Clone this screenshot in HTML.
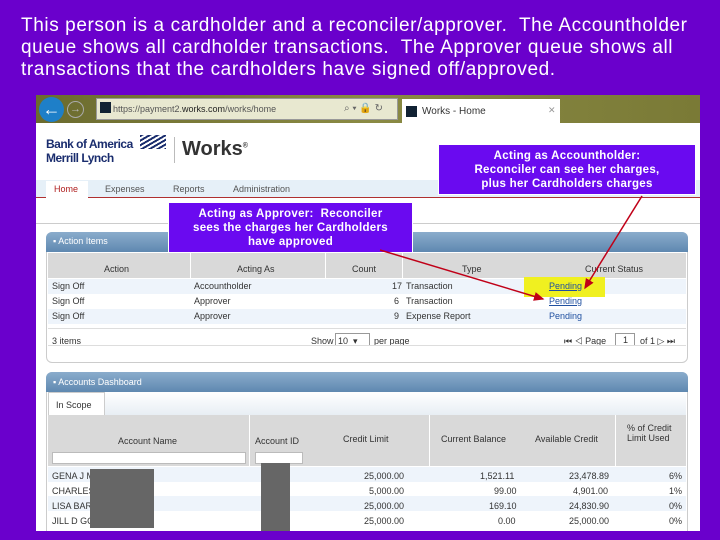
<!DOCTYPE html>
<html><head><meta charset="utf-8"><style>
*{margin:0;padding:0;box-sizing:border-box}
body{width:720px;height:540px;background:#6a00cc;position:relative;overflow:hidden;font-family:"Liberation Sans",sans-serif}
.abs{position:absolute}
.t{position:absolute;left:21px;top:15px;color:#fff;font-size:19px;letter-spacing:0.6px;line-height:22px;white-space:nowrap}
.shot{position:absolute;left:36px;top:95px;width:664px;height:436px;background:#fff;overflow:hidden}
.f{font-size:9px;color:#333;position:absolute;white-space:nowrap}
.call{position:absolute;background:#6a0af0;color:#fff;font-weight:bold;font-size:11.5px;line-height:14px;text-align:center;border:1px solid #fff;letter-spacing:0.3px}
.row{position:absolute;left:12px;width:638px;height:15px}
</style></head><body>
<div class="t">This person is a cardholder and a reconciler/approver.&nbsp; The Accountholder<br>queue shows all cardholder transactions.&nbsp; The Approver queue shows all<br>transactions that the cardholders have signed off/approved.</div>
<div class="shot">
 <div class="abs" style="left:0;top:0;width:664px;height:28px;background:linear-gradient(90deg,#6b6b2e,#8a8a44 50%,#7a7a36)"></div>
 <div class="abs" style="left:3px;top:2px;width:25px;height:25px;border-radius:50%;background:#1e7fc8;color:#fff;font-size:18px;line-height:24px;text-align:center;font-weight:bold">←</div>
 <div class="abs" style="left:31px;top:6px;width:17px;height:17px;border-radius:50%;border:1px solid #aaa;color:#bbb;font-size:11px;line-height:15px;text-align:center">→</div>
 <div class="abs" style="left:60px;top:3px;width:302px;height:22px;background:#e8e8d0;border:1px solid #999"></div>
 <div class="f" style="left:77px;top:9px;color:#555">https://payment2.<b style="color:#222;font-weight:normal">works.com</b>/works/home</div>
 <div class="abs" style="left:64px;top:7px;width:11px;height:11px;background:#123"></div>
 <div class="f" style="left:308px;top:8px;color:#666;font-size:10px">⌕ ▾ 🔒 ↻</div>
 <div class="abs" style="left:366px;top:4px;width:158px;height:24px;background:#fff"></div>
 <div class="abs" style="left:370px;top:11px;width:11px;height:11px;background:#123"></div>
 <div class="f" style="left:386px;top:11px;font-size:10px">Works - Home</div>
 <div class="f" style="left:512px;top:10px;color:#999">✕</div>
 <div class="abs" style="left:10px;top:42px;color:#1a2d6e;font-weight:bold;font-size:12px;line-height:14px;letter-spacing:-0.5px">Bank of America<br>Merrill Lynch</div>
 <div class="abs" style="left:104px;top:40px;width:26px;height:14px;background:repeating-linear-gradient(150deg,#1a2d6e 0 2px,#fff 2px 4px)"></div>
 <div class="abs" style="left:138px;top:42px;width:1px;height:26px;background:#bbb"></div>
 <div class="abs" style="left:146px;top:43px;font-size:20px;font-weight:bold;color:#333">Works<sup style="font-size:7px">®</sup></div>
 <div class="abs" style="left:0;top:85px;width:664px;height:18px;background:#e6f0f8;border-bottom:1px solid #b03030"></div>
 <div class="abs" style="left:10px;top:86px;width:42px;height:17px;background:#fff"></div>
 <div class="f" style="left:18px;top:89px;color:#b02020">Home</div>
 <div class="f" style="left:69px;top:89px;color:#555">Expenses</div>
 <div class="f" style="left:137px;top:89px;color:#555">Reports</div>
 <div class="f" style="left:197px;top:89px;color:#555">Administration</div>
 <div class="abs" style="left:0;top:128px;width:664px;height:1px;background:#ccc"></div>
 <div class="abs" style="left:10px;top:137px;width:642px;height:131px;border:1px solid #ccc;border-radius:6px;background:#fff"></div>
 <div class="abs" style="left:10px;top:137px;width:642px;height:20px;border-radius:6px 6px 0 0;background:linear-gradient(#8aaccc,#5f88b0)"></div>
 <div class="f" style="left:17px;top:141px;color:#fff">▪ Action Items</div>
 <div class="abs" style="left:12px;top:158px;width:638px;height:25px;background:#d9d9d9"></div>
 <div class="abs" style="left:154px;top:158px;width:1px;height:25px;background:#fff"></div>
 <div class="abs" style="left:289px;top:158px;width:1px;height:25px;background:#fff"></div>
 <div class="abs" style="left:366px;top:158px;width:1px;height:25px;background:#fff"></div>
 <div class="f" style="left:68px;top:169px">Action</div>
 <div class="f" style="left:201px;top:169px">Acting As</div>
 <div class="f" style="left:316px;top:169px">Count</div>
 <div class="f" style="left:426px;top:169px">Type</div>
 <div class="f" style="left:549px;top:169px">Current Status</div>
 <div class="row" style="top:184px;background:#eef4fb"></div>
 <div class="row" style="top:214px;background:#eef4fb"></div>
 <div class="abs" style="left:488px;top:182px;width:81px;height:20px;background:#f0f020"></div>
 <div class="f" style="left:16px;top:186px">Sign Off</div><div class="f" style="left:158px;top:186px">Accountholder</div><div class="f" style="left:356px;top:186px">17</div><div class="f" style="left:370px;top:186px">Transaction</div><div class="f" style="left:513px;top:186px;color:#2050a0;text-decoration:underline">Pending</div>
 <div class="f" style="left:16px;top:201px">Sign Off</div><div class="f" style="left:158px;top:201px">Approver</div><div class="f" style="left:358px;top:201px">6</div><div class="f" style="left:370px;top:201px">Transaction</div><div class="f" style="left:513px;top:201px;color:#2050a0;text-decoration:underline">Pending</div>
 <div class="f" style="left:16px;top:216px">Sign Off</div><div class="f" style="left:158px;top:216px">Approver</div><div class="f" style="left:358px;top:216px">9</div><div class="f" style="left:370px;top:216px">Expense Report</div><div class="f" style="left:513px;top:216px;color:#2050a0">Pending</div>
 <div class="abs" style="left:12px;top:233px;width:638px;height:1px;background:#ddd"></div>
 <div class="f" style="left:16px;top:241px">3 items</div>
 <div class="f" style="left:275px;top:241px">Show</div>
 <div class="abs" style="left:299px;top:238px;width:35px;height:13px;border:1px solid #999"></div>
 <div class="f" style="left:302px;top:241px">10 &nbsp;▾</div>
 <div class="f" style="left:338px;top:241px">per page</div>
 <div class="f" style="left:528px;top:241px">⏮ ◁ Page</div>
 <div class="abs" style="left:579px;top:238px;width:20px;height:13px;border:1px solid #999"></div>
 <div class="f" style="left:587px;top:240px">1</div>
 <div class="f" style="left:604px;top:241px">of 1 ▷ ⏭</div>
 <div class="abs" style="left:12px;top:250px;width:638px;height:1px;background:#ddd"></div>
 <div class="abs" style="left:10px;top:277px;width:642px;height:170px;border:1px solid #ccc;border-radius:6px;background:#fff"></div>
 <div class="abs" style="left:10px;top:277px;width:642px;height:20px;border-radius:6px 6px 0 0;background:linear-gradient(#8aaccc,#5f88b0)"></div>
 <div class="f" style="left:17px;top:282px;color:#fff">▪ Accounts Dashboard</div>
 <div class="abs" style="left:12px;top:297px;width:638px;height:23px;background:linear-gradient(#fff,#e8eef4)"></div>
 <div class="abs" style="left:12px;top:297px;width:57px;height:24px;background:#fff;border:1px solid #ccc;border-bottom:none"></div>
 <div class="f" style="left:20px;top:305px">In Scope</div>
 <div class="abs" style="left:12px;top:320px;width:638px;height:51px;background:#d9d9d9"></div>
 <div class="abs" style="left:213px;top:320px;width:1px;height:51px;background:#fff"></div>
 <div class="abs" style="left:393px;top:320px;width:1px;height:51px;background:#fff"></div>
 <div class="abs" style="left:579px;top:320px;width:1px;height:51px;background:#fff"></div>
 <div class="f" style="left:82px;top:341px">Account Name</div>
 <div class="f" style="left:219px;top:341px">Account ID</div>
 <div class="f" style="left:307px;top:339px">Credit Limit</div>
 <div class="f" style="left:405px;top:339px">Current Balance</div>
 <div class="f" style="left:499px;top:339px">Available Credit</div>
 <div class="f" style="left:591px;top:328px;line-height:10px">% of Credit<br>Limit Used</div>
 <div class="abs" style="left:16px;top:357px;width:194px;height:12px;background:#fff;border:1px solid #bbb"></div>
 <div class="abs" style="left:219px;top:357px;width:48px;height:12px;background:#fff;border:1px solid #bbb"></div>
 <div class="row" style="top:372px;background:#eef4fb"></div>
 <div class="row" style="top:401px;background:#eef4fb"></div>
 <div class="f" style="left:16px;top:376px">GENA J M</div><div class="f" style="left:328px;top:376px">25,000.00</div><div class="f" style="left:444px;top:376px">1,521.11</div><div class="f" style="left:533px;top:376px">23,478.89</div><div class="f" style="left:633px;top:376px">6%</div>
 <div class="f" style="left:16px;top:391px">CHARLES</div><div class="f" style="left:333px;top:391px">5,000.00</div><div class="f" style="left:458px;top:391px">99.00</div><div class="f" style="left:537px;top:391px">4,901.00</div><div class="f" style="left:633px;top:391px">1%</div>
 <div class="f" style="left:16px;top:406px">LISA BAR</div><div class="f" style="left:328px;top:406px">25,000.00</div><div class="f" style="left:453px;top:406px">169.10</div><div class="f" style="left:533px;top:406px">24,830.90</div><div class="f" style="left:633px;top:406px">0%</div>
 <div class="f" style="left:16px;top:421px">JILL D GO</div><div class="f" style="left:328px;top:421px">25,000.00</div><div class="f" style="left:462px;top:421px">0.00</div><div class="f" style="left:533px;top:421px">25,000.00</div><div class="f" style="left:633px;top:421px">0%</div>
 <div class="abs" style="left:54px;top:374px;width:64px;height:59px;background:#666"></div>
 <div class="abs" style="left:225px;top:368px;width:29px;height:70px;background:#666"></div>
</div>
<div class="call" style="left:438px;top:144px;width:258px;height:51px;padding-top:4px">Acting as Accountholder:<br>Reconciler can see her charges,<br>plus her Cardholders charges</div>
<div class="call" style="left:168px;top:202px;width:245px;height:51px;padding-top:4px">Acting as Approver:&nbsp; Reconciler<br>sees the charges her Cardholders<br>have approved</div>
<svg class="abs" style="left:0;top:0" width="720" height="540">
 <defs><marker id="a" markerWidth="8" markerHeight="8" refX="6" refY="3" orient="auto"><path d="M0,0 L7,3 L0,6z" fill="#c00018"/></marker></defs>
 <line x1="380" y1="250" x2="543" y2="299" stroke="#c00018" stroke-width="1.5" marker-end="url(#a)"/>
 <line x1="642" y1="196" x2="585" y2="288" stroke="#c00018" stroke-width="1.5" marker-end="url(#a)"/>
</svg>
</body></html>
